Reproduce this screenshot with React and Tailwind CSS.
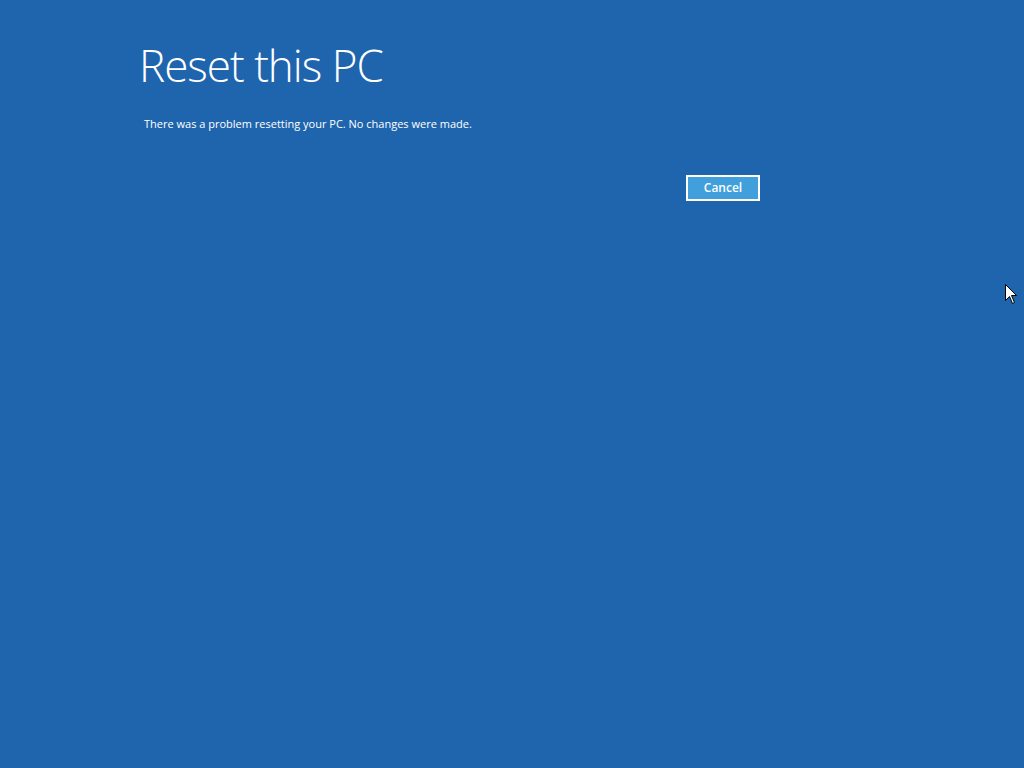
export default function App() {
  return (
    <div className="relative w-[1024px] h-[768px] overflow-hidden bg-[#1f65ae] text-white" style={{ fontFamily: '"Open Sans", "Noto Sans", sans-serif' }}>
      <div className="flex flex-col w-[619px] ml-[139px] pt-[33px]">
        <h1 className="text-[44px] leading-[64px] font-light tracking-[-1px]">Reset this PC</h1>
        <p className="mt-[19px] ml-[5px] text-[11px] leading-[16px]">There was a problem resetting your PC. No changes were made.</p>
        <button className="self-end mt-[43px] -mr-[2px] w-[74px] h-[26px] border-2 border-white bg-[#41a0dc] text-[12px] font-semibold text-white leading-none">Cancel</button>
      </div>
      <svg className="absolute left-[1005px] top-[284px]" width="13" height="21" viewBox="0 0 13 21">
        <path d="M0.5 0.5 L0.5 16.5 L4.5 12.5 L7.5 19.5 L9.5 18.5 L6.5 11.5 L11.5 11.5 Z" fill="white" stroke="black" strokeWidth="1" />
      </svg>
    </div>
  );
}
